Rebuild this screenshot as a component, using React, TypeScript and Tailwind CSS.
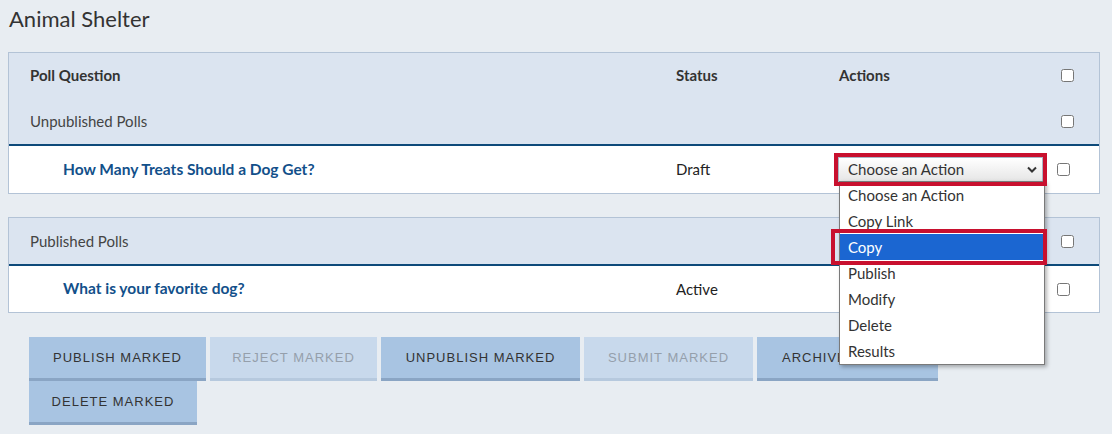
const font = { fontFamily: "Lato, 'Noto Sans', sans-serif" };

const options = ["Choose an Action", "Copy Link", "Copy", "Publish", "Modify", "Delete", "Results"];

const buttons = [
  { label: "PUBLISH MARKED", w: "w-[177px]", disabled: false },
  { label: "REJECT MARKED", w: "w-[167px]", disabled: true },
  { label: "UNPUBLISH MARKED", w: "w-[199px]", disabled: false },
  { label: "SUBMIT MARKED", w: "w-[169px]", disabled: true },
  { label: "ARCHIVE MARKED", w: "w-[181px]", disabled: false },
  { label: "DELETE MARKED", w: "w-[168px]", disabled: false },
];

function Check() {
  return <input type="checkbox" className="m-0 h-[13px] w-[13px] shrink-0" />;
}

function ActionSelect() {
  return (
    <div className="relative h-[33px] w-[213px]">
      <div className="m-[4px] flex h-[25px] items-center justify-between border border-[#a9b6c6] bg-gradient-to-b from-white to-[#e6e6e6] pl-[9px] pr-[5px] text-[15px] text-[#333]">
        <span>Choose an Action</span>
        <svg width="10" height="7" viewBox="0 0 10 7">
          <path d="M1 1.5 L5 5.5 L9 1.5" fill="none" stroke="#333" strokeWidth="2" />
        </svg>
      </div>
      <div className="pointer-events-none absolute inset-0 z-20 border-4 border-[#c8102e]" />
      <div className="absolute left-[5px] top-[28px] z-10 w-[206px] border border-[#7a7a7a] bg-white shadow-[2px_2px_4px_rgba(0,0,0,0.3)]">
        {options.map((o, i) => (
          <div
            key={o}
            className={
              i === 2
                ? "flex h-[26px] items-center bg-[#1b66d1] pl-[8px] text-[15px] text-white"
                : "flex h-[26px] items-center pl-[8px] text-[15px] text-[#333]"
            }
          >
            {o}
          </div>
        ))}
      </div>
      <div className="pointer-events-none absolute left-[-3px] top-[76px] z-30 h-[36px] w-[216px] border-4 border-[#c8102e]" />
    </div>
  );
}

export default function App() {
  return (
    <div className="min-h-[434px] bg-[#e8edf2] text-[#333]" style={font}>
      <h1 className="pl-[9px] pt-[4px] text-[22px] font-normal leading-[30px] text-[#333]">Animal Shelter</h1>

      <div className="ml-2 mr-3 mt-[18px] border border-[#b3c3d6]">
        <div className="flex h-[45px] items-center bg-[#dbe4f0] pl-[21px] pr-[25px] text-[15px]">
          <div className="flex-1 font-bold">Poll Question</div>
          <div className="w-[163px] font-bold">Status</div>
          <div className="w-[222px] font-bold">Actions</div>
          <Check />
        </div>
        <div className="flex h-[48px] items-center border-b-2 border-[#0d4a7a] bg-[#dbe4f0] pl-[21px] pr-[25px] text-[15px] text-[#444]">
          <div className="flex-1">Unpublished Polls</div>
          <Check />
        </div>
        <div className="flex h-[47px] items-center bg-white pl-[54px] pr-[29px] text-[15px]">
          <div className="flex-1 text-[15.5px] font-bold text-[#12508a]">How Many Treats Should a Dog Get?</div>
          <div className="w-[158px] text-[#222]">Draft</div>
          <ActionSelect />
          <div className="ml-[10px] flex">
            <Check />
          </div>
        </div>
      </div>

      <div className="ml-2 mr-3 mt-[23px] border border-[#b3c3d6]">
        <div className="flex h-[48px] items-center border-b-2 border-[#0d4a7a] bg-[#dbe4f0] pl-[21px] pr-[25px] text-[15px] text-[#444]">
          <div className="flex-1">Published Polls</div>
          <Check />
        </div>
        <div className="flex h-[46px] items-center bg-white pl-[54px] pr-[29px] text-[15px]">
          <div className="flex-1 text-[15.5px] font-bold text-[#12508a]">What is your favorite dog?</div>
          <div className="w-[381px] text-[#222]">Active</div>
          <Check />
        </div>
      </div>

      <div
        className="mt-[24px] flex flex-wrap gap-x-[4px] pl-[29px] pr-[40px]"
        style={{ fontFamily: "'Liberation Sans', Arial, sans-serif" }}
      >
        {buttons.map((b) => (
          <div
            key={b.label}
            className={
              b.disabled
                ? `${b.w} flex h-[44px] items-center justify-center border-b-[3px] border-[#b6c9de] bg-[#c8d9ec] text-[13px] tracking-[1px] text-[#959fab]`
                : `${b.w} flex h-[44px] items-center justify-center border-b-[3px] border-[#8aa5c4] bg-[#a8c4e2] text-[13px] tracking-[1px] text-[#333]`
            }
          >
            {b.label}
          </div>
        ))}
      </div>
    </div>
  );
}
